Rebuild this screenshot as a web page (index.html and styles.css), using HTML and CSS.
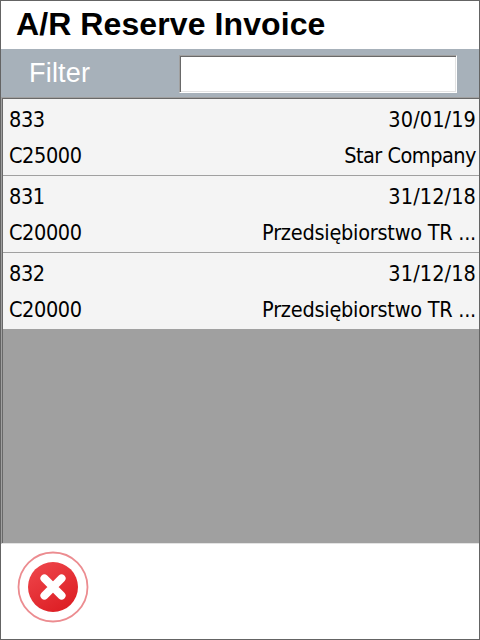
FILE: index.html
```html
<!DOCTYPE html>
<html lang="en">
<head>
<meta charset="utf-8">
<title>A/R Reserve Invoice</title>
<link rel="stylesheet" href="styles.css">
</head>
<body>
<main class="window">
  <h1 class="title"><span>A/R Reserve Invoice</span></h1>
  <div class="filter">
    <label class="filter-label" for="filter">Filter</label>
    <input class="filter-input" id="filter" type="text">
  </div>
  <section class="list">
    <article class="row">
      <div class="line"><span class="code">833</span><span class="date">30/01/19</span></div>
      <div class="line"><span class="code">C25000</span><span class="name name-short">Star Company</span></div>
    </article>
    <article class="row">
      <div class="line"><span class="code">831</span><span class="date">31/12/18</span></div>
      <div class="line"><span class="code">C20000</span><span class="name">Przedsiębiorstwo TR ...</span></div>
    </article>
    <article class="row">
      <div class="line"><span class="code">832</span><span class="date">31/12/18</span></div>
      <div class="line"><span class="code">C20000</span><span class="name">Przedsiębiorstwo TR ...</span></div>
    </article>
  </section>
  <footer class="footer">
    <button class="close" aria-label="Close">
      <svg width="72" height="72" viewBox="0 0 72 72">
        <defs>
          <linearGradient id="red" x1="0.2" y1="0" x2="0.8" y2="1">
            <stop offset="0" stop-color="#ee454a"/>
            <stop offset="1" stop-color="#dc1c22"/>
          </linearGradient>
        </defs>
        <circle cx="36" cy="36" r="34.5" fill="#fff" stroke="#ec8c90" stroke-width="1.8"/>
        <circle cx="36" cy="36" r="25" fill="url(#red)"/>
        <path d="M27.4 27.4 44.6 44.6M44.6 27.4 27.4 44.6" stroke="#fff" stroke-width="7.9" stroke-linecap="round"/>
      </svg>
    </button>
  </footer>
</main>
</body>
</html>
```
FILE: styles.css
```css
* { box-sizing: border-box; }
body { margin: 0; background: #fff; }
.window {
  width: 480px;
  height: 640px;
  border: 1px solid #646464;
  display: flex;
  flex-direction: column;
  background: #fff;
  color: #000;
}
.title {
  margin: 0;
  height: 48px;
  padding-left: 15px;
  font: bold 32px/46px "Liberation Sans", Arial, sans-serif;
  letter-spacing: 0.09px;
  white-space: nowrap;
}
.filter {
  height: 48px;
  padding: 6px 22px 4px 28px;
  background: #a7b1ba;
  display: flex;
  justify-content: space-between;
}
.filter-label {
  color: #fff;
  font: 27px/36px "Liberation Sans", Arial, sans-serif;
  letter-spacing: 0.2px;
}
.filter-input {
  width: 278px;
  height: 38px;
  margin: 0;
  padding: 0 6px;
  border: 1px solid;
  border-color: #a0a0a0 #fff #fff #a0a0a0;
  box-shadow: inset 1px 1px #696969, inset -1px -1px #e3e3e3;
  background: #fff;
  font: 22px "DejaVu Sans Condensed", sans-serif;
  outline: none;
}
.list {
  height: 447px;
  border-top: 1px solid #a0a0a0;
  border-left: 1px solid #a0a0a0;
  border-bottom: 1px solid #e3e3e3;
  box-shadow: inset 1px 1px #696969;
  padding: 1px 0 0 1px;
  background: #a0a0a0;
}
.row {
  height: 77px;
  padding: 3px 3px 0 6px;
  border-bottom: 1px solid #a0a0a0;
  background: #f4f4f4;
}
.line {
  height: 36px;
  display: flex;
  justify-content: space-between;
  font: 21.5px/36px "DejaVu Sans Condensed", "DejaVu Sans", Tahoma, sans-serif;
  font-stretch: condensed;
  white-space: nowrap;
}
.code { letter-spacing: -0.4px; }
.date { letter-spacing: 0.1px; }
.name { letter-spacing: -0.25px; }
.name-short { letter-spacing: -0.5px; }
.footer { flex: 1; padding: 7px 0 0 16px; }
.close { display: block; padding: 0; border: 0; background: none; }
.close svg { display: block; }
```
